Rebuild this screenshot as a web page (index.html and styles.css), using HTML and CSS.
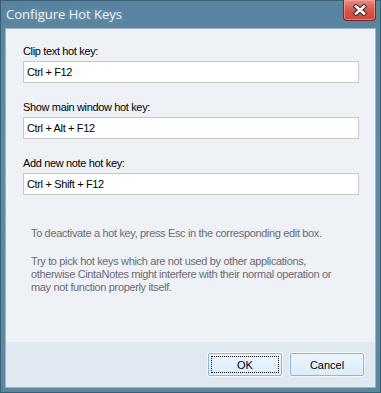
FILE: index.html
```html
<!DOCTYPE html>
<html lang="en">

<head>
    <meta charset="UTF-8">
    <title>Configure Hot Keys</title>
    <link rel="stylesheet" href="styles.css">
</head>

<body>
    <div class="window">
        <!-- Title bar -->
        <header class="titlebar">
            <span class="title">Configure Hot Keys</span>
            <button class="close" title="Close">
                <svg width="16" height="12" viewBox="0 0 16 12">
                    <path d="M4 2.5 L12 9.5 M12 2.5 L4 9.5" stroke="#3b2a2a" stroke-width="4.6" stroke-linecap="square" />
                    <path d="M4 2.5 L12 9.5 M12 2.5 L4 9.5" stroke="#ffffff" stroke-width="2.6" stroke-linecap="square" />
                </svg>
            </button>
        </header>

        <!-- Dialog body -->
        <div class="client">
            <section class="panel">
                <div class="field">
                    <label>Clip text hot key:</label>
                    <input type="text" value="Ctrl + F12">
                </div>
                <div class="field">
                    <label>Show main window hot key:</label>
                    <input type="text" value="Ctrl + Alt + F12">
                </div>
                <div class="field">
                    <label>Add new note hot key:</label>
                    <input type="text" value="Ctrl + Shift + F12">
                </div>

                <div class="hint">
                    <p>To deactivate a hot key, press Esc in the corresponding edit box.</p>
                    <p>Try to pick hot keys which are not used by other applications, otherwise CintaNotes might interfere with their normal operation or may not function properly itself.</p>
                </div>
            </section>

            <footer class="buttons">
                <button class="btn focused"><span>OK</span></button>
                <button class="btn"><span>Cancel</span></button>
            </footer>
        </div>
    </div>
</body>

</html>
```

FILE: styles.css
```css
* {
    margin: 0;
    padding: 0;
    box-sizing: border-box;
}

body {
    background-color: #ffffff;
    font-family: "Liberation Sans", Arial, sans-serif;
    font-size: 11px;
    letter-spacing: -0.35px;
}

.window {
    width: 381px;
    height: 393px;
    display: flex;
    flex-direction: column;
    border: 1px solid #3a5f75;
    background: linear-gradient(to bottom, #5884a0, #5f8ca6 40%, #5a87a0);
    padding: 0 4px 4px 4px;
}

.titlebar {
    height: 27px;
    display: flex;
    justify-content: space-between;
    align-items: flex-start;
}

.title {
    font-family: "Open Sans", sans-serif;
    font-size: 13px;
    color: #eef3f7;
    margin-top: 4px;
    margin-left: 1px;
    letter-spacing: 0;
    text-shadow: 0 0 6px rgba(220, 235, 245, 0.35);
}

.close {
    width: 33px;
    height: 21px;
    margin-top: -1px;
    border: 1px solid #7a2a22;
    border-top: none;
    border-radius: 0 0 4px 4px;
    background: linear-gradient(to bottom, #e98b80, #d9574b 50%, #c9473b);
    box-shadow: inset 0 0 0 1px rgba(255, 190, 180, 0.45);
    display: flex;
    align-items: center;
    justify-content: center;
}

.client {
    flex: 1;
    display: flex;
    flex-direction: column;
    border: 1px solid #9db5c5;
    background-color: #eef1f6;
}

.panel {
    flex: 1;
    padding: 16px 16px 0 17px;
}

.field {
    display: flex;
    flex-direction: column;
    margin-bottom: 18px;
}

.field label {
    color: #000000;
    line-height: 13px;
    height: 13px;
    margin-bottom: 3px;
}

.field input {
    height: 22px;
    border: 1px solid #c8c8c8;
    background-color: #ffffff;
    font-family: "Liberation Sans", Arial, sans-serif;
    font-size: 11px;
    letter-spacing: -0.35px;
    color: #000000;
    padding: 0 3px;
    outline: none;
}

.hint {
    padding: 14px 0 0 8px;
    color: #6c6c72;
    line-height: 13px;
}

.hint p {
    width: 314px;
    margin-bottom: 15px;
}

.buttons {
    height: 45px;
    background-color: #e2e8f1;
    display: flex;
    justify-content: flex-end;
    gap: 8px;
    padding: 11px 11px 0 0;
}

.btn {
    width: 74px;
    height: 23px;
    border: 1px solid #86b7e6;
    border-radius: 2px;
    background: linear-gradient(to bottom, #ecf5fd, #dcecfc);
    box-shadow: 0 0 0 1px #f6f9fc;
    font-family: "Liberation Sans", Arial, sans-serif;
    font-size: 11px;
    color: #000000;
    padding: 2px;
    display: flex;
}

.btn span {
    flex: 1;
    display: flex;
    align-items: center;
    justify-content: center;
    border: 1px dotted transparent;
}

.btn.focused span {
    border-color: #000000;
}
```
